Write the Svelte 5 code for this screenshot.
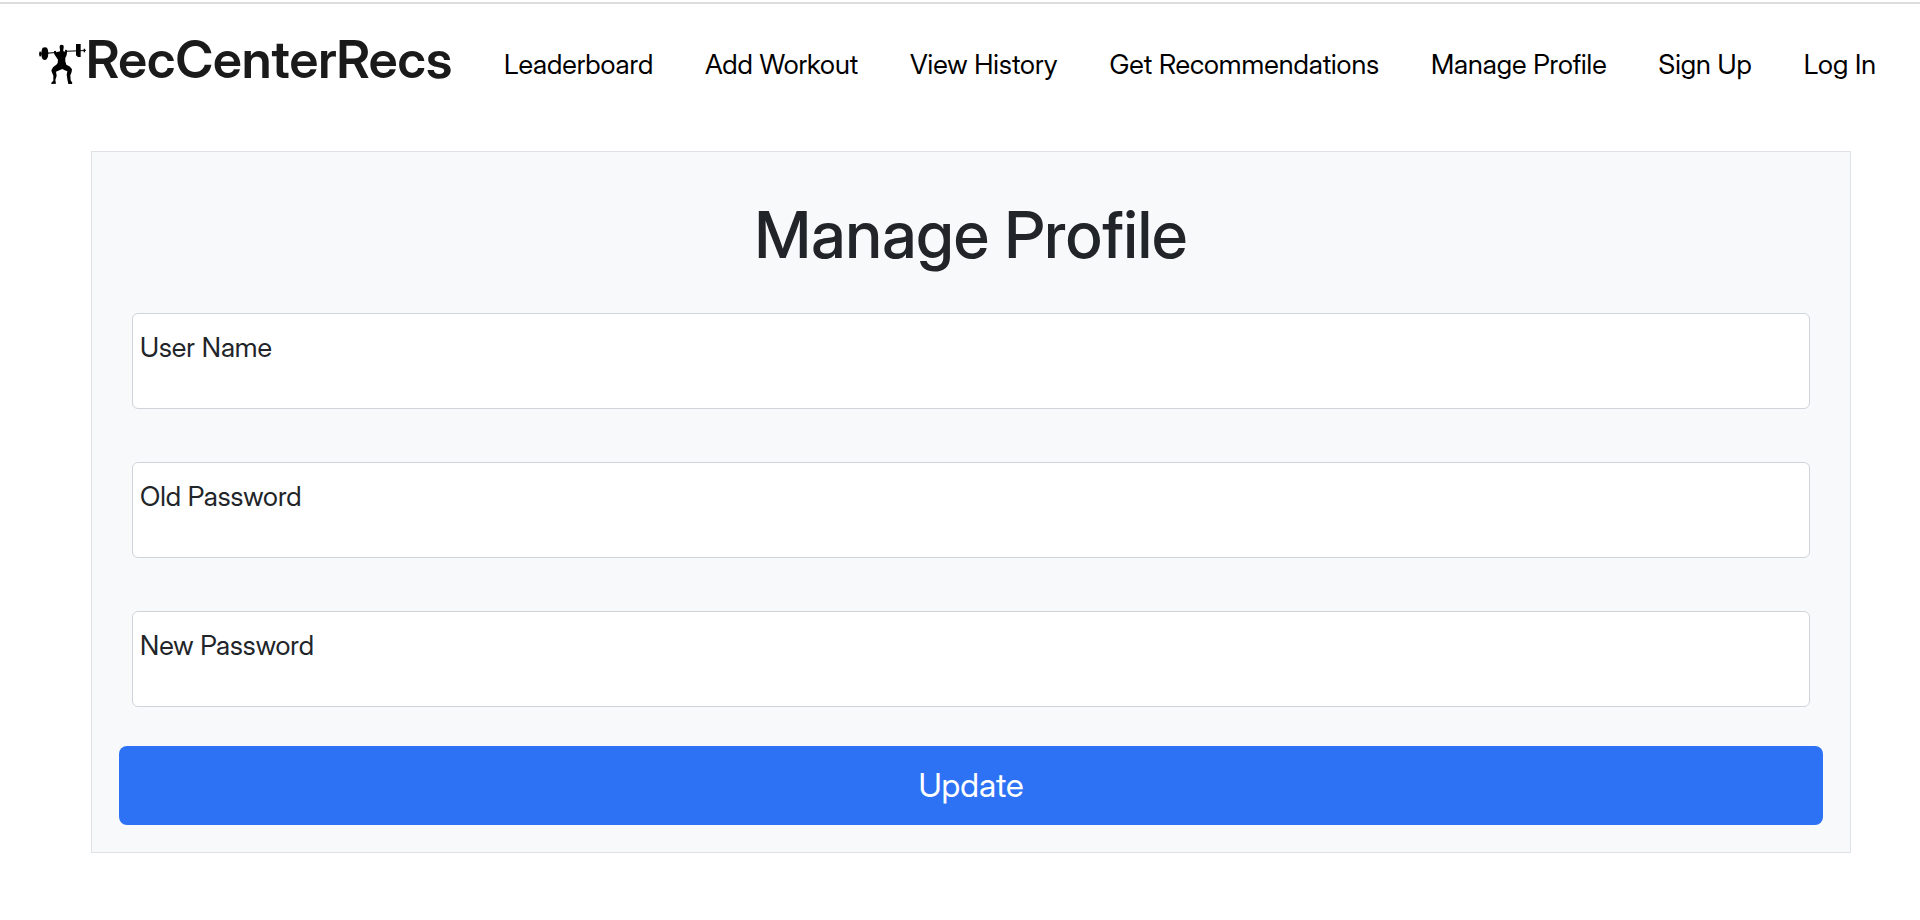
<script>
  const links = [
    'Leaderboard',
    'Add Workout',
    'View History',
    'Get Recommendations',
    'Manage Profile',
    'Sign Up',
    'Log In'
  ];

  const fields = $state([
    { id: 'username', label: 'User Name', type: 'text', value: '' },
    { id: 'old-password', label: 'Old Password', type: 'password', value: '' },
    { id: 'new-password', label: 'New Password', type: 'password', value: '' }
  ]);
</script>

<header>
  <nav aria-label="Main">
    <a class="brand" href="#home">
      <svg viewBox="27 42 141 120" aria-hidden="true">
        <path d="M27 72L78 67M106 64L168 61" stroke="#333" stroke-width="4" />
        <path d="M28 65h6v14h-6z" />
        <path d="M38 53Q45 50 51 53Q55 59 55 70Q55 82 50 88Q44 92 38 88Q34 81 34 70Q34 59 38 53Z" />
        <path d="M138 42h14v39h-10v-4h-4zM161 56h4v11h-4z" />
        <path d="M90 46Q95 42 100 46Q103 52 100 59L100 64L106 65L105 60Q108 58 111 61L111 69Q110 78 106 83Q104 94 109 104Q121 108 126 118Q126 127 121 136L122 151L127 158L126 162H115L113 153L110 134L112 124Q104 121 97 117Q89 121 78 125L80 137L76 150L78 161L64 162L64 158L70 152L70 137L64 122Q67 110 79 104Q85 98 84 89Q79 81 76 77Q71 72 72 64Q75 61 78 64L79 67L90 64L90 59Q87 52 90 46Z" />
      </svg>
      <span>RecCenterRecs</span>
    </a>
    {#each links as link}
      <a class="link" href="#{link.toLowerCase().replaceAll(' ', '-')}">{link}</a>
    {/each}
  </nav>
</header>

<main>
  <form onsubmit={(e) => e.preventDefault()}>
    <h1>Manage Profile</h1>
    <div class="fields">
      {#each fields as field (field.id)}
        <div class="field">
          <input id={field.id} type={field.type} bind:value={field.value} />
          <label for={field.id}>{field.label}</label>
        </div>
      {/each}
    </div>
    <button type="submit">Update</button>
  </form>
</main>

<style>
  :global(body) {
    margin: 0;
    background: #fff;
    color: #212529;
    font-family: 'Inter Display', Inter, 'Liberation Sans', sans-serif;
    font-size: 27px;
    line-height: 40px;
  }

  header {
    margin-top: 2px;
    border-top: 2px solid #dcdcde;
    padding: 24px 44px 43px 39px;
  }

  nav {
    display: flex;
    flex-wrap: wrap;
    align-items: flex-end;
    justify-content: space-between;
  }

  a {
    color: #000;
    text-decoration: none;
    white-space: nowrap;
  }

  .link {
    padding-bottom: 7px;
  }

  .brand {
    display: flex;
    align-items: baseline;
    color: #1a1a1a;
    font-size: 52px;
    font-weight: 600;
    line-height: 64px;
  }

  .brand svg {
    width: 47px;
    height: 40px;
    align-self: flex-end;
    margin-bottom: 8px;
  }

  main {
    padding: 16px 69px 48px 91px;
  }

  form {
    display: flex;
    flex-direction: column;
    padding: 27px;
    border: 1px solid #dee2e6;
    background: #f8f9fb;
  }

  h1 {
    margin: 16px 0 32px;
    font-size: 65px;
    font-weight: 550;
    line-height: 80px;
    text-align: center;
  }

  .fields {
    display: grid;
    gap: 53px;
    padding: 6px 13px 39px;
  }

  .field {
    display: grid;
  }

  input,
  label {
    grid-area: 1 / 1;
  }

  input {
    box-sizing: border-box;
    width: 100%;
    height: 96px;
    padding: 40px 8px 8px;
    border: 1px solid #ced4da;
    border-radius: 6px;
    background: #fff;
    color: inherit;
    font: inherit;
  }

  label {
    place-self: start;
    padding: 15px 8px;
    pointer-events: none;
  }

  button {
    padding: 16px 24px;
    border: 0;
    border-radius: 8px;
    background: #2d72f5;
    color: #fff;
    font-family: inherit;
    font-size: 33px;
    line-height: 47px;
    cursor: pointer;
  }
</style>
